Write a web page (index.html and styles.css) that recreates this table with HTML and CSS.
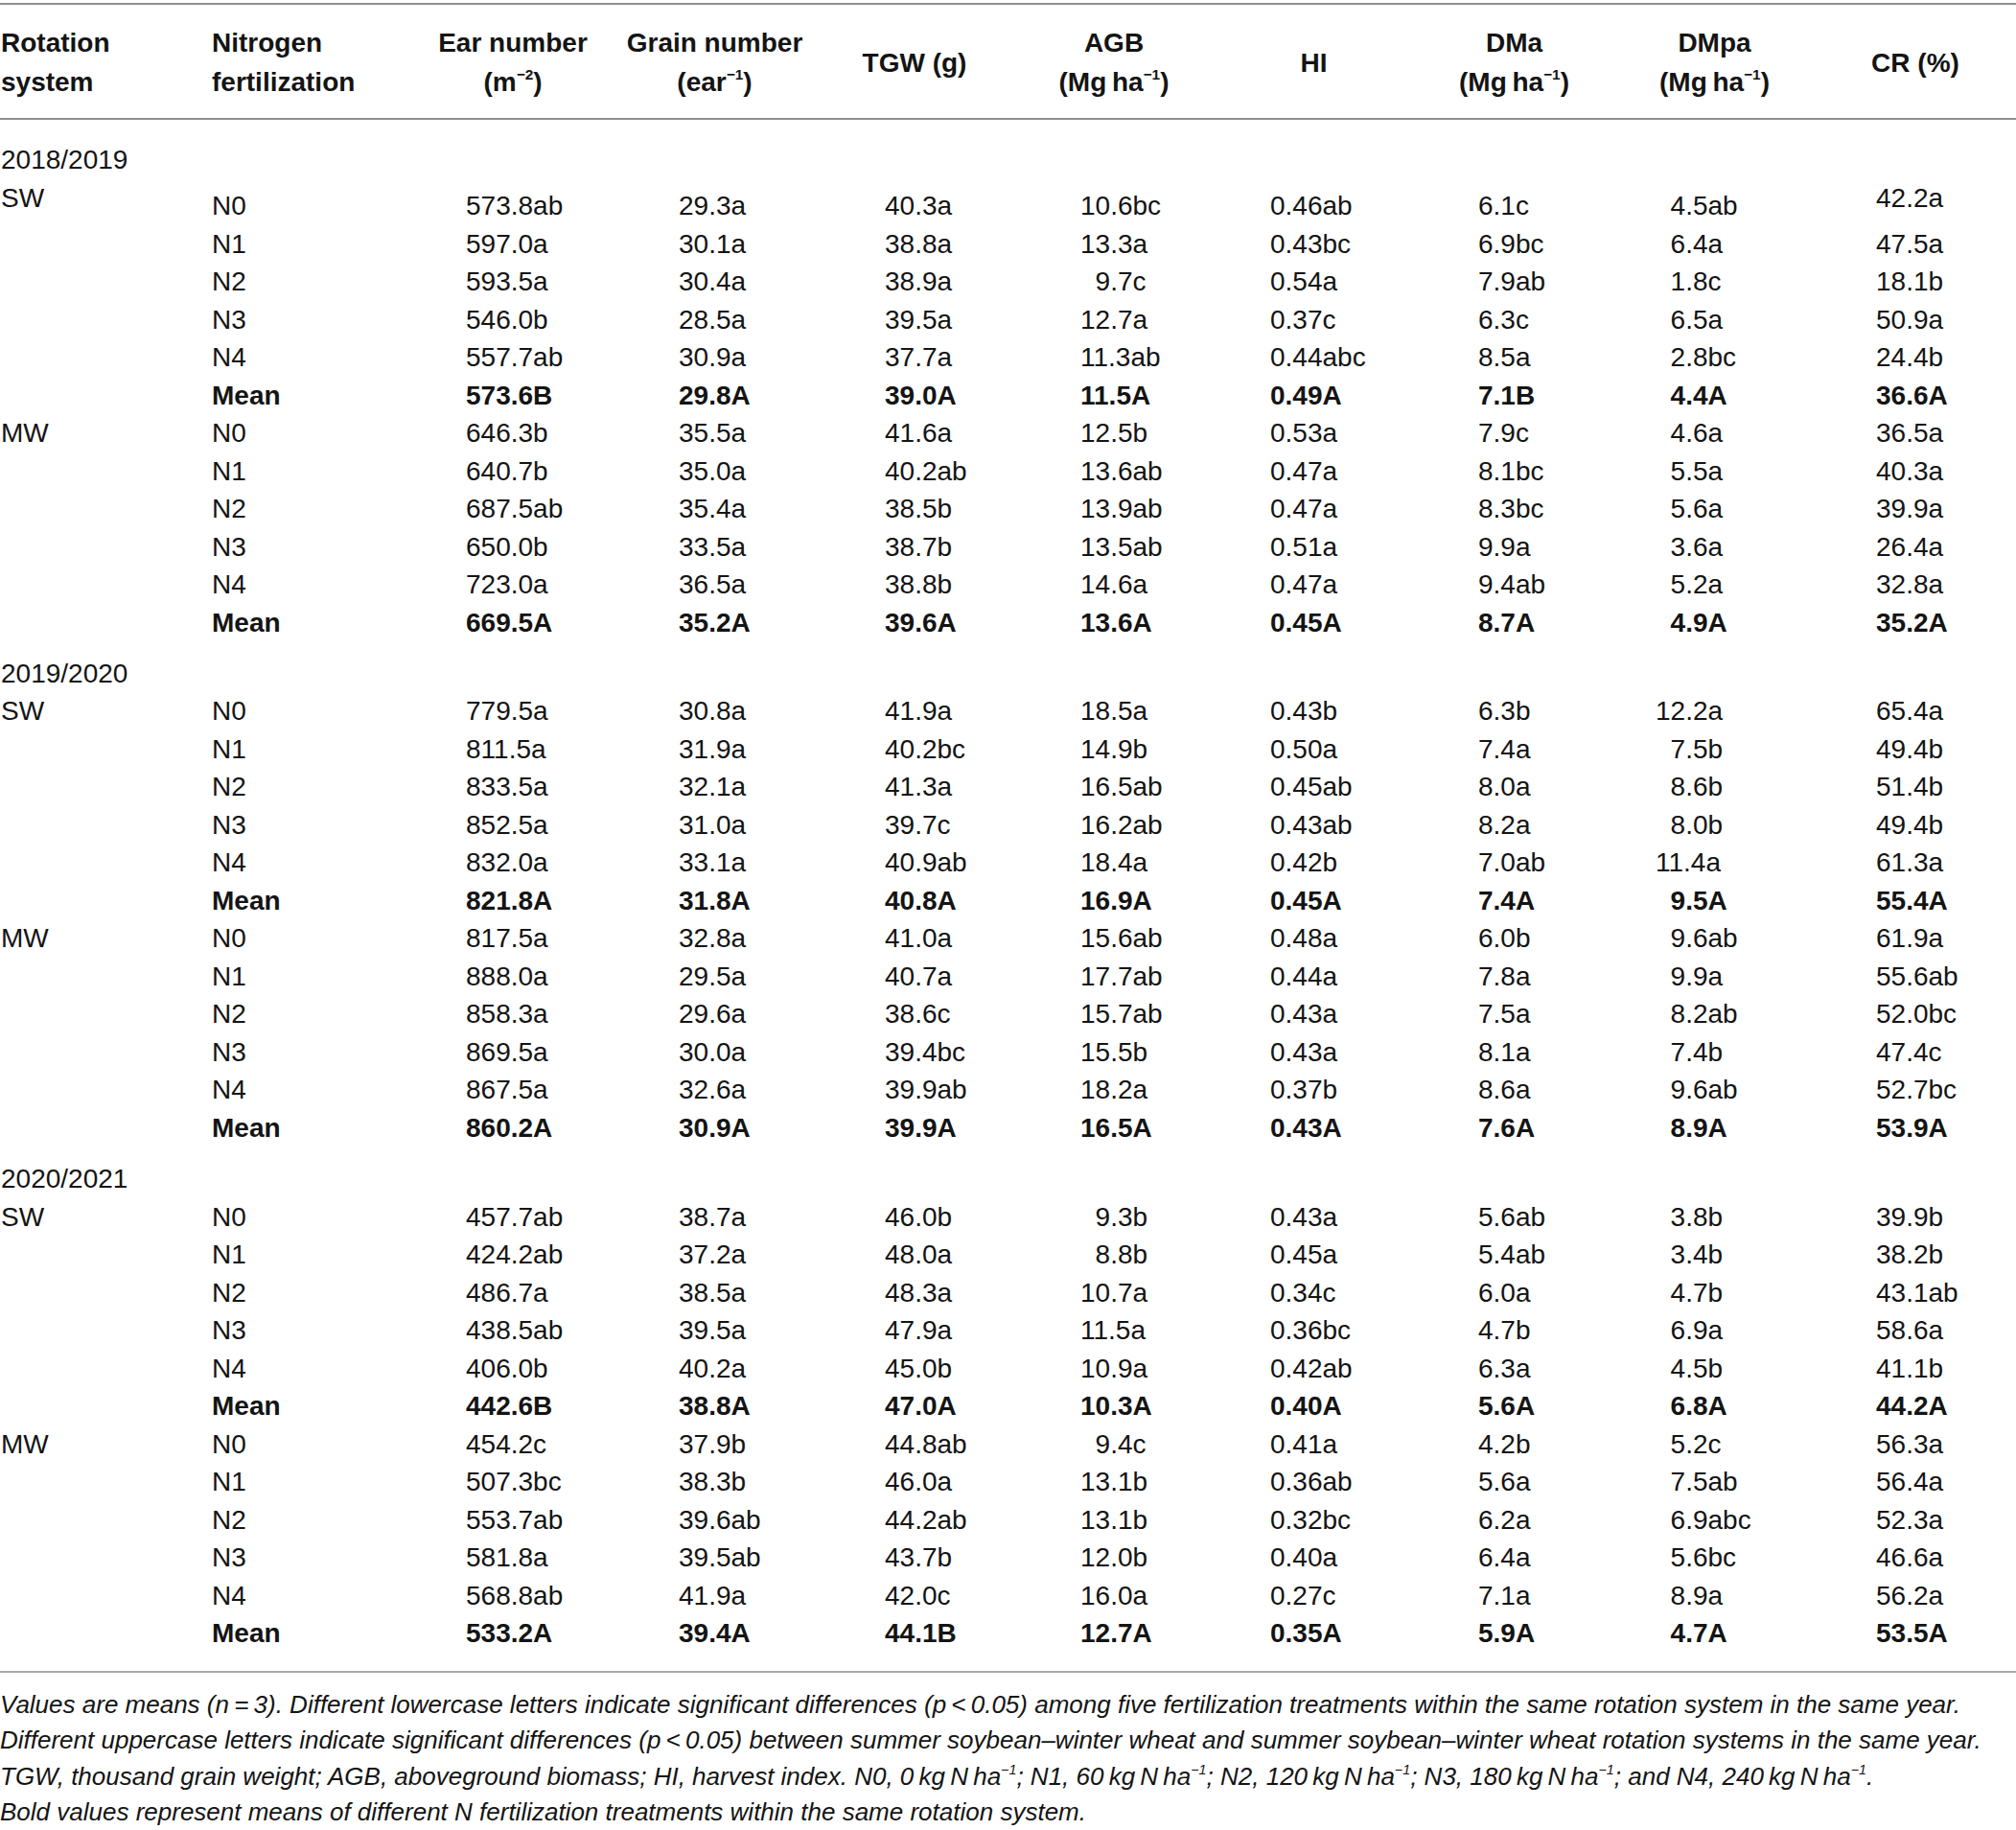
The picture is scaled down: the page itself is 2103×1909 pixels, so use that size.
FILE: index.html
```html
<!DOCTYPE html>
<html lang="en">
<head>
<meta charset="utf-8">
<title>Table</title>
<link rel="stylesheet" href="styles.css">
</head>
<body>
<table class="data">
<colgroup>
<col class="c1"><col class="c2"><col class="c3"><col class="c4"><col class="c5"><col class="c6"><col class="c7"><col class="c8"><col class="c9"><col class="c10">
</colgroup>
<thead>
<tr>
<th class="lt">Rotation<br>system</th>
<th class="lt">Nitrogen<br>fertilization</th>
<th>Ear number<br>(m<sup>−2</sup>)</th>
<th>Grain number<br>(ear<sup>−1</sup>)</th>
<th>TGW (g)</th>
<th>AGB<br>(Mg&#8201;ha<sup>−1</sup>)</th>
<th>HI</th>
<th>DMa<br>(Mg&#8201;ha<sup>−1</sup>)</th>
<th>DMpa<br>(Mg&#8201;ha<sup>−1</sup>)</th>
<th>CR (%)</th>
</tr>
</thead>
<tbody>
<tr class="year firstyear"><td colspan="10">2018/2019</td></tr>
<tr class="first"><td class="top">SW</td><td>N0</td><td>573.8ab</td><td>29.3a</td><td>40.3a</td><td>10.6bc</td><td>0.46ab</td><td>6.1c</td><td class="pad">4.5ab</td><td class="top">42.2a</td></tr>
<tr><td></td><td>N1</td><td>597.0a</td><td>30.1a</td><td>38.8a</td><td>13.3a</td><td>0.43bc</td><td>6.9bc</td><td class="pad">6.4a</td><td>47.5a</td></tr>
<tr><td></td><td>N2</td><td>593.5a</td><td>30.4a</td><td>38.9a</td><td class="pad">9.7c</td><td>0.54a</td><td>7.9ab</td><td class="pad">1.8c</td><td>18.1b</td></tr>
<tr><td></td><td>N3</td><td>546.0b</td><td>28.5a</td><td>39.5a</td><td>12.7a</td><td>0.37c</td><td>6.3c</td><td class="pad">6.5a</td><td>50.9a</td></tr>
<tr><td></td><td>N4</td><td>557.7ab</td><td>30.9a</td><td>37.7a</td><td>11.3ab</td><td>0.44abc</td><td>8.5a</td><td class="pad">2.8bc</td><td>24.4b</td></tr>
<tr class="mean"><td></td><td>Mean</td><td>573.6B</td><td>29.8A</td><td>39.0A</td><td>11.5A</td><td>0.49A</td><td>7.1B</td><td class="pad">4.4A</td><td>36.6A</td></tr>
<tr><td>MW</td><td>N0</td><td>646.3b</td><td>35.5a</td><td>41.6a</td><td>12.5b</td><td>0.53a</td><td>7.9c</td><td class="pad">4.6a</td><td>36.5a</td></tr>
<tr><td></td><td>N1</td><td>640.7b</td><td>35.0a</td><td>40.2ab</td><td>13.6ab</td><td>0.47a</td><td>8.1bc</td><td class="pad">5.5a</td><td>40.3a</td></tr>
<tr><td></td><td>N2</td><td>687.5ab</td><td>35.4a</td><td>38.5b</td><td>13.9ab</td><td>0.47a</td><td>8.3bc</td><td class="pad">5.6a</td><td>39.9a</td></tr>
<tr><td></td><td>N3</td><td>650.0b</td><td>33.5a</td><td>38.7b</td><td>13.5ab</td><td>0.51a</td><td>9.9a</td><td class="pad">3.6a</td><td>26.4a</td></tr>
<tr><td></td><td>N4</td><td>723.0a</td><td>36.5a</td><td>38.8b</td><td>14.6a</td><td>0.47a</td><td>9.4ab</td><td class="pad">5.2a</td><td>32.8a</td></tr>
<tr class="mean"><td></td><td>Mean</td><td>669.5A</td><td>35.2A</td><td>39.6A</td><td>13.6A</td><td>0.45A</td><td>8.7A</td><td class="pad">4.9A</td><td>35.2A</td></tr>

<tr class="year"><td colspan="10">2019/2020</td></tr>
<tr><td>SW</td><td>N0</td><td>779.5a</td><td>30.8a</td><td>41.9a</td><td>18.5a</td><td>0.43b</td><td>6.3b</td><td>12.2a</td><td>65.4a</td></tr>
<tr><td></td><td>N1</td><td>811.5a</td><td>31.9a</td><td>40.2bc</td><td>14.9b</td><td>0.50a</td><td>7.4a</td><td class="pad">7.5b</td><td>49.4b</td></tr>
<tr><td></td><td>N2</td><td>833.5a</td><td>32.1a</td><td>41.3a</td><td>16.5ab</td><td>0.45ab</td><td>8.0a</td><td class="pad">8.6b</td><td>51.4b</td></tr>
<tr><td></td><td>N3</td><td>852.5a</td><td>31.0a</td><td>39.7c</td><td>16.2ab</td><td>0.43ab</td><td>8.2a</td><td class="pad">8.0b</td><td>49.4b</td></tr>
<tr><td></td><td>N4</td><td>832.0a</td><td>33.1a</td><td>40.9ab</td><td>18.4a</td><td>0.42b</td><td>7.0ab</td><td>11.4a</td><td>61.3a</td></tr>
<tr class="mean"><td></td><td>Mean</td><td>821.8A</td><td>31.8A</td><td>40.8A</td><td>16.9A</td><td>0.45A</td><td>7.4A</td><td class="pad">9.5A</td><td>55.4A</td></tr>
<tr><td>MW</td><td>N0</td><td>817.5a</td><td>32.8a</td><td>41.0a</td><td>15.6ab</td><td>0.48a</td><td>6.0b</td><td class="pad">9.6ab</td><td>61.9a</td></tr>
<tr><td></td><td>N1</td><td>888.0a</td><td>29.5a</td><td>40.7a</td><td>17.7ab</td><td>0.44a</td><td>7.8a</td><td class="pad">9.9a</td><td>55.6ab</td></tr>
<tr><td></td><td>N2</td><td>858.3a</td><td>29.6a</td><td>38.6c</td><td>15.7ab</td><td>0.43a</td><td>7.5a</td><td class="pad">8.2ab</td><td>52.0bc</td></tr>
<tr><td></td><td>N3</td><td>869.5a</td><td>30.0a</td><td>39.4bc</td><td>15.5b</td><td>0.43a</td><td>8.1a</td><td class="pad">7.4b</td><td>47.4c</td></tr>
<tr><td></td><td>N4</td><td>867.5a</td><td>32.6a</td><td>39.9ab</td><td>18.2a</td><td>0.37b</td><td>8.6a</td><td class="pad">9.6ab</td><td>52.7bc</td></tr>
<tr class="mean"><td></td><td>Mean</td><td>860.2A</td><td>30.9A</td><td>39.9A</td><td>16.5A</td><td>0.43A</td><td>7.6A</td><td class="pad">8.9A</td><td>53.9A</td></tr>

<tr class="year"><td colspan="10">2020/2021</td></tr>
<tr><td>SW</td><td>N0</td><td>457.7ab</td><td>38.7a</td><td>46.0b</td><td class="pad">9.3b</td><td>0.43a</td><td>5.6ab</td><td class="pad">3.8b</td><td>39.9b</td></tr>
<tr><td></td><td>N1</td><td>424.2ab</td><td>37.2a</td><td>48.0a</td><td class="pad">8.8b</td><td>0.45a</td><td>5.4ab</td><td class="pad">3.4b</td><td>38.2b</td></tr>
<tr><td></td><td>N2</td><td>486.7a</td><td>38.5a</td><td>48.3a</td><td>10.7a</td><td>0.34c</td><td>6.0a</td><td class="pad">4.7b</td><td>43.1ab</td></tr>
<tr><td></td><td>N3</td><td>438.5ab</td><td>39.5a</td><td>47.9a</td><td>11.5a</td><td>0.36bc</td><td>4.7b</td><td class="pad">6.9a</td><td>58.6a</td></tr>
<tr><td></td><td>N4</td><td>406.0b</td><td>40.2a</td><td>45.0b</td><td>10.9a</td><td>0.42ab</td><td>6.3a</td><td class="pad">4.5b</td><td>41.1b</td></tr>
<tr class="mean"><td></td><td>Mean</td><td>442.6B</td><td>38.8A</td><td>47.0A</td><td>10.3A</td><td>0.40A</td><td>5.6A</td><td class="pad">6.8A</td><td>44.2A</td></tr>
<tr><td>MW</td><td>N0</td><td>454.2c</td><td>37.9b</td><td>44.8ab</td><td class="pad">9.4c</td><td>0.41a</td><td>4.2b</td><td class="pad">5.2c</td><td>56.3a</td></tr>
<tr><td></td><td>N1</td><td>507.3bc</td><td>38.3b</td><td>46.0a</td><td>13.1b</td><td>0.36ab</td><td>5.6a</td><td class="pad">7.5ab</td><td>56.4a</td></tr>
<tr><td></td><td>N2</td><td>553.7ab</td><td>39.6ab</td><td>44.2ab</td><td>13.1b</td><td>0.32bc</td><td>6.2a</td><td class="pad">6.9abc</td><td>52.3a</td></tr>
<tr><td></td><td>N3</td><td>581.8a</td><td>39.5ab</td><td>43.7b</td><td>12.0b</td><td>0.40a</td><td>6.4a</td><td class="pad">5.6bc</td><td>46.6a</td></tr>
<tr><td></td><td>N4</td><td>568.8ab</td><td>41.9a</td><td>42.0c</td><td>16.0a</td><td>0.27c</td><td>7.1a</td><td class="pad">8.9a</td><td>56.2a</td></tr>
<tr class="mean last"><td></td><td>Mean</td><td>533.2A</td><td>39.4A</td><td>44.1B</td><td>12.7A</td><td>0.35A</td><td>5.9A</td><td class="pad">4.7A</td><td>53.5A</td></tr>
</tbody>
</table>
<div class="notes">
<p>Values are means (<i class="v">n</i>&#8201;=&#8201;3). Different lowercase letters indicate significant differences (<i class="v">p</i>&#8201;&lt;&#8201;0.05) among five fertilization treatments within the same rotation system in the same year.</p>
<p>Different uppercase letters indicate significant differences (<i class="v">p</i>&#8201;&lt;&#8201;0.05) between summer soybean–winter wheat and summer soybean–winter wheat rotation systems in the same year.</p>
<p>TGW, thousand grain weight; AGB, aboveground biomass; HI, harvest index. N0, 0&#8201;kg&#8201;N&#8201;ha<sup>−1</sup>; N1, 60&#8201;kg&#8201;N&#8201;ha<sup>−1</sup>; N2, 120&#8201;kg&#8201;N&#8201;ha<sup>−1</sup>; N3, 180&#8201;kg&#8201;N&#8201;ha<sup>−1</sup>; and N4, 240&#8201;kg&#8201;N&#8201;ha<sup>−1</sup>.</p>
<p>Bold values represent means of different N fertilization treatments within the same rotation system.</p>
</div>
</body>
</html>
```

FILE: styles.css
```css
html, body {
  margin: 0;
  padding: 0;
  background: #ffffff;
}

body {
  font-family: "Liberation Sans", Arial, sans-serif;
  font-size: 28px;
  color: #141414;
  width: 2103px;
}

.data {
  width: 2103px;
  table-layout: fixed;
  border-collapse: collapse;
  margin-top: 3px;
  border-top: 2px solid #8f8f8f;
  border-bottom: 2px solid #a8a8a8;
}

.c1 { width: 221px; }
.c2 { width: 208px; }
.c3 { width: 212px; }
.c4 { width: 209px; }
.c5 { width: 208px; }
.c6 { width: 208px; }
.c7 { width: 209px; }
.c8 { width: 209px; }
.c9 { width: 209px; }
.c10 { width: 210px; }

.data thead th {
  font-weight: bold;
  line-height: 41px;
  height: 116px;
  padding: 2px 0 0 0;
  text-align: center;
  vertical-align: middle;
  border-bottom: 2px solid #8f8f8f;
  white-space: nowrap;
}

.data thead th.lt {
  text-align: left;
}

.data thead th:first-child {
  padding-left: 1px;
}

sup {
  font-size: 0.55em;
  line-height: 0;
  vertical-align: 0.75em;
}

.data tbody td {
  padding: 0;
  line-height: 39.5px;
  white-space: nowrap;
  vertical-align: middle;
}

.data tbody td:nth-child(1) { padding-left: 1px; }
.data tbody td:nth-child(2) { padding-left: 0; }
.data tbody td:nth-child(3) { padding-left: 57px; }
.data tbody td:nth-child(4) { padding-left: 67px; }
.data tbody td:nth-child(5) { padding-left: 73px; }
.data tbody td:nth-child(6) { padding-left: 69px; }
.data tbody td:nth-child(7) { padding-left: 59px; }
.data tbody td:nth-child(8) { padding-left: 67px; }
.data tbody td:nth-child(9) { padding-left: 43px; }
.data tbody td:nth-child(10) { padding-left: 64px; }

.data tbody td.pad {
  text-indent: 0.556em;
}

.data tbody tr.year td {
  padding-left: 1px;
  padding-top: 13.8px;
}

.data tbody tr.firstyear td {
  padding-top: 22px;
}

.data tbody tr.first td {
  padding-top: 8.5px;
}

.data tbody tr.first td.top {
  padding-top: 0;
  padding-bottom: 8.5px;
}

.data tbody tr.mean td {
  font-weight: bold;
}

.data tbody tr.mean td:first-child {
  font-weight: normal;
}

.data tbody tr.last td {
  padding-bottom: 19px;
}

.notes {
  padding-top: 15px;
}

.notes p {
  margin: 0;
  font-size: 26px;
  font-style: italic;
  line-height: 37.5px;
  white-space: nowrap;
}

.notes .v {
  font-style: italic;
}
```
